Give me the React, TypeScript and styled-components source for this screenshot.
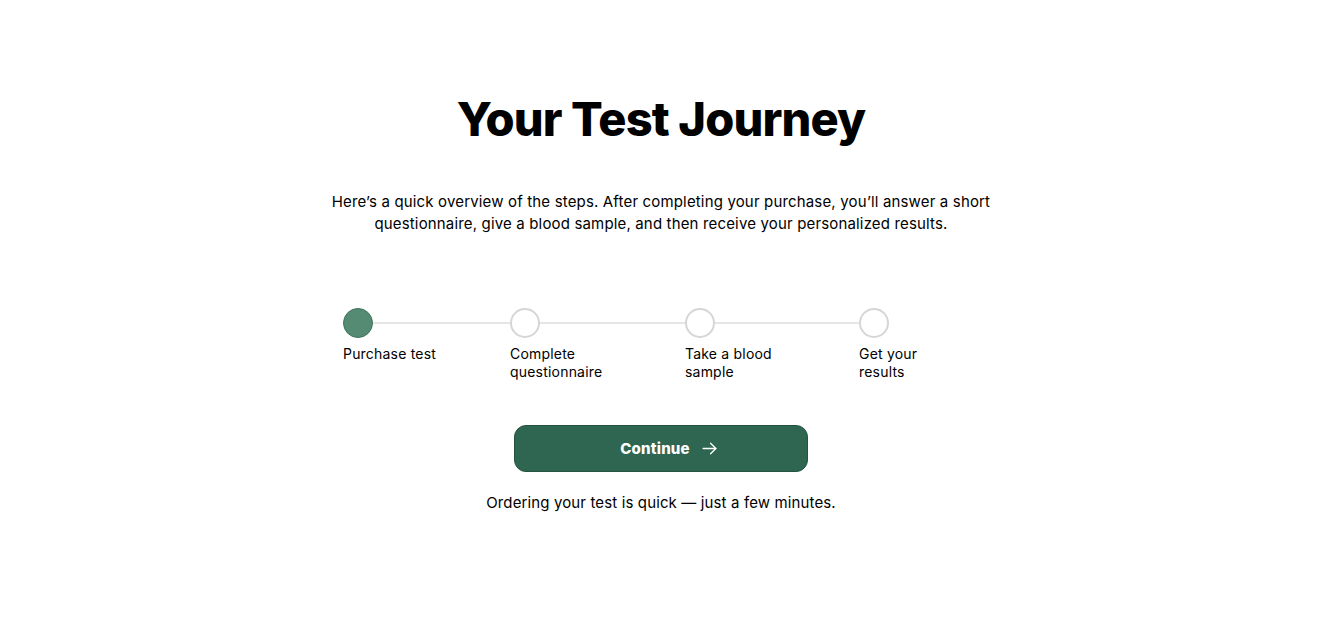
import React from "react";
import styled, { createGlobalStyle } from "styled-components";

const GlobalStyle = createGlobalStyle`
  html, body { margin: 0; padding: 0; background: #ffffff; }
  body { font-family: Inter, "Open Sans", "Liberation Sans", sans-serif; color: #000; }
  * { box-sizing: border-box; }
`;

const Page = styled.main`
  display: flex;
  flex-direction: column;
  align-items: center;
  padding-top: 91px;
  min-height: 632px;
`;

const Title = styled.h1`
  margin: 0;
  font-family: Inter, "Open Sans", sans-serif;
  font-weight: 800;
  font-size: 47px;
  line-height: 56px;
  letter-spacing: -0.85px;
  color: #000;
`;

const Intro = styled.p`
  margin: 44px 0 0;
  font-size: 15px;
  line-height: 22px;
  letter-spacing: 0.16px;
  text-align: center;
  color: #000;
`;

const Stepper = styled.ol`
  list-style: none;
  margin: 73px 0 0;
  padding: 0;
  width: 636px;
  display: flex;
`;

const Step = styled.li<{ $w?: number }>`
  display: flex;
  flex-direction: column;
  ${(p) => (p.$w ? `width: ${p.$w}px; flex: none;` : `flex: 1;`)}
`;

const Track = styled.div`
  display: flex;
  align-items: center;
  height: 30px;
`;

const Dot = styled.span<{ $active?: boolean }>`
  width: 30px;
  height: 30px;
  border-radius: 50%;
  flex: none;
  background: ${(p) => (p.$active ? "#558a73" : "#ffffff")};
  border: ${(p) => (p.$active ? "1px solid #3f735d" : "2px solid #d6d6d6")};
`;

const Connector = styled.span`
  flex: 1;
  height: 2px;
  background: #e6e6e6;
`;

const Label = styled.span<{ $max: number }>`
  margin-top: 7px;
  font-size: 14px;
  line-height: 18px;
  letter-spacing: 0.2px;
  color: #000;
  max-width: ${(p) => p.$max}px;
`;

const Continue = styled.button`
  margin-top: 44px;
  width: 294px;
  height: 47px;
  padding: 0 0 0 16px;
  border-radius: 12px;
  border: 1px solid #24533f;
  background: #2f6651;
  color: #fff;
  font-family: Inter, "Open Sans", sans-serif;
  font-weight: 800;
  font-size: 15px;
  letter-spacing: 0.2px;
  display: flex;
  align-items: center;
  justify-content: center;
  gap: 11px;
  cursor: pointer;
`;

const Note = styled.p`
  margin: 20px 0 0;
  font-size: 15px;
  line-height: 22px;
  letter-spacing: 0.13px;
  color: #000;
`;

const steps = [
  { label: "Purchase test", w: 167, max: 120, active: true },
  { label: "Complete questionnaire", w: 175, max: 120 },
  { label: "Take a blood sample", w: 174, max: 100 },
  { label: "Get your results", max: 70 },
];

const Arrow = () => (
  <svg width="17" height="17" viewBox="0 0 24 24" fill="none" stroke="#fff" strokeWidth="1.8" strokeLinecap="round" strokeLinejoin="round">
    <path d="M3 12h18" />
    <path d="M13.5 4.5L21 12l-7.5 7.5" />
  </svg>
);

export default function App() {
  return (
    <>
      <GlobalStyle />
      <Page>
        <Title>Your Test Journey</Title>
        <Intro>
          Here’s a quick overview of the steps. After completing your purchase, you’ll answer a short
          <br />
          questionnaire, give a blood sample, and then receive your personalized results.
        </Intro>
        <Stepper>
          {steps.map((s, i) => (
            <Step key={s.label} $w={s.w}>
              <Track>
                <Dot $active={s.active} />
                {i < steps.length - 1 && <Connector />}
              </Track>
              <Label $max={s.max}>{s.label}</Label>
            </Step>
          ))}
        </Stepper>
        <Continue type="button">
          Continue <Arrow />
        </Continue>
        <Note>Ordering your test is quick — just a few minutes.</Note>
      </Page>
    </>
  );
}
